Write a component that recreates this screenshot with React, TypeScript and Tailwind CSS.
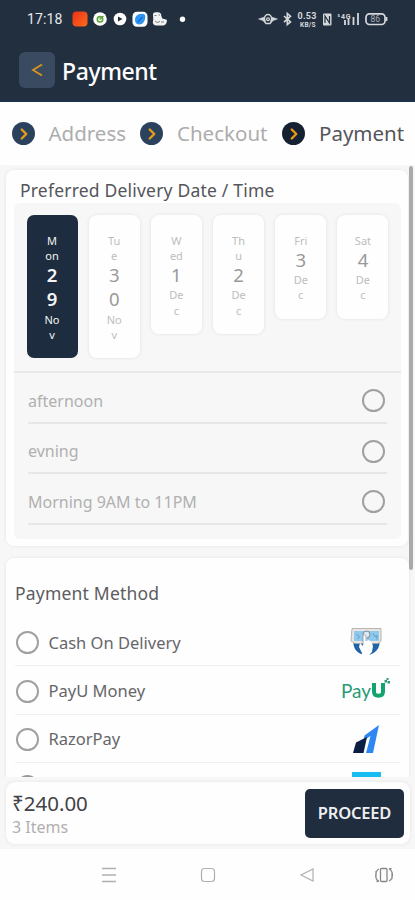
import { ChevronRight } from "lucide-react";

function StatusBar() {
  return (
    <div className="flex h-[38px] items-center px-[27px] text-white">
      <span className="w-[45px] font-['Roboto',sans-serif] text-[14px] tracking-[0.1px] whitespace-nowrap text-[#e8eaec]">
        17:18
      </span>
      <svg className="h-[38px] w-[120px]" viewBox="72 0 120 38">
        <defs>
          <linearGradient id="hot" x1="0" y1="0" x2="1" y2="1">
            <stop offset="0" stopColor="#e8321a" />
            <stop offset="1" stopColor="#ff6a1c" />
          </linearGradient>
        </defs>
        <rect x="72.5" y="11.5" width="15" height="15" rx="4" fill="url(#hot)" />
        <circle cx="100" cy="19" r="6.8" fill="#fff" />
        <circle cx="100" cy="19.3" r="2.7" fill="none" stroke="#5aa536" strokeWidth="1.6" />
        <path d="M99.5 19.5l4-3.5" stroke="#5aa536" strokeWidth="1.3" />
        <circle cx="120" cy="19" r="6.3" fill="#fff" />
        <path d="M118 16.5l4.5 2.5-4.5 2.5z" fill="#222f3f" />
        <rect x="132.5" y="11.8" width="15" height="15" rx="4.5" fill="#fff" />
        <path
          d="M135 20c0-4 3-6.5 6.5-6 2-.5 3.8.5 3.8 2.5 0 4.5-2.5 8-6 8-2.3 0-4.3-1.5-4.3-4.5z"
          fill="#2e94f2"
        />
        <path d="M138 22l4.5-5" stroke="#1769d0" strokeWidth="1.2" />
        <path
          d="M153 14.5c0-2 2-2.7 4-2.2 3-.3 4.5 1.2 4.3 3.7l1 2.5 4.5 1.2c.5 3.5-1.500 5.8-4.8 5.8h-6c-3-.3-3.700-3-2.700-5.500z"
          fill="#f2f2f2"
        />
        <path
          d="M154.5 15.5h2M158.5 15h1.5M155 21l2 1.5 3-1M161 22h3"
          stroke="#7b8490"
          strokeWidth="1"
          fill="none"
        />
        <circle cx="182.5" cy="19.2" r="2.7" fill="#fff" />
      </svg>
      <svg
        className="ml-auto h-[38px] w-[132px] shrink-0"
        viewBox="257 0 132 38"
        fill="none"
        stroke="#d5d8db"
      >
        <path d="M259.500 19l6-2 1 4.500zM278.500 19l-6-2-1 4.500z" fill="#d5d8db" strokeWidth=".5" />
        <path d="M265 21c0-3.500 1.500-6.500 4-6.500s4 3 4 6.500l-2 2.500h-4z" strokeWidth="1.500" />
        <circle cx="269" cy="19.300" r="1.400" strokeWidth="1.200" />
        <path d="M285 16l6.500 6-3.200 2.500V13.500l3.200 2.700-6.500 6" strokeWidth="1.600" />
        <g fill="#d5d8db" stroke="none" fontFamily="Roboto, sans-serif" fontWeight="700">
          <text x="298.500" y="18.500" fontSize="9" textLength="19">
            0.53
          </text>
          <text x="301" y="26.500" fontSize="6.500" textLength="15.500">
            KB/S
          </text>
          <text x="338.500" y="18.500" fontSize="7" textLength="13">
            ⁵4G
          </text>
        </g>
        <rect x="324" y="13.500" width="8.500" height="12" rx="1" fill="#d5d8db" stroke="none" />
        <path d="M326 23v-7l4.500 7v-7" stroke="#222f3f" strokeWidth="1.200" />
        <path d="M346 25v-5M349.500 25v-6M354.500 25V17M359 25V13" strokeWidth="1.800" />
        <rect x="367" y="13.800" width="19" height="10.700" rx="3.500" strokeWidth="1.700" />
        <path d="M387.500 17v4" strokeWidth="1.800" />
        <text
          x="371.500"
          y="22.300"
          fill="#a9afb6"
          stroke="none"
          fontSize="8.500"
          fontFamily="Roboto, sans-serif"
        >
          86
        </text>
      </svg>
    </div>
  );
}

function Header() {
  return (
    <header className="h-[102px] shrink-0 border-b-[3px] border-[#1d3048] bg-[#222f3f]">
      <StatusBar />
      <div className="flex items-center pt-[14px] pl-[19px]">
        <button className="flex h-9 w-9 items-center justify-center rounded-[6px] bg-[#3a4b61]">
          <svg className="h-4 w-4" viewBox="0 0 16 16" fill="none">
            <path d="M13 2.500L4 8l9 5.500" stroke="#d9951f" strokeWidth="1.800" />
          </svg>
        </button>
        <h1 className="ml-[7px] pt-[2px] text-[23px] leading-[34px] font-medium tracking-[-0.4px] text-white">
          Payment
        </h1>
      </div>
    </header>
  );
}

function StepDot({ active = false }: { active?: boolean }) {
  return (
    <span
      className={
        active
          ? "flex h-[23px] w-[23px] items-center justify-center rounded-full bg-[#152033]"
          : "flex h-[23px] w-[23px] items-center justify-center rounded-full bg-[#2b425d]"
      }
    >
      <ChevronRight className="h-[18px] w-[18px] text-[#e79a18]" strokeWidth={3.2} />
    </span>
  );
}

function Steps() {
  return (
    <div className="flex h-[63px] shrink-0 items-center bg-[#fefefe] pl-[12px] text-[20.5px] text-[#adadad]">
      <StepDot />
      <span className="ml-[13.5px] w-[91.5px] whitespace-nowrap">Address</span>
      <StepDot />
      <span className="ml-[14px] w-[105px] whitespace-nowrap">Checkout</span>
      <StepDot active />
      <span className="ml-[14px] whitespace-nowrap text-[#55555a]">Payment</span>
    </div>
  );
}

const days = [
  { day: ["M", "on"], date: ["2", "9"], month: ["No", "v"], selected: true },
  { day: ["Tu", "e"], date: ["3", "0"], month: ["No", "v"] },
  { day: ["W", "ed"], date: ["1"], month: ["De", "c"] },
  { day: ["Th", "u"], date: ["2"], month: ["De", "c"] },
  { day: ["Fri"], date: ["3"], month: ["De", "c"] },
  { day: ["Sat"], date: ["4"], month: ["De", "c"] },
];

const slots = ["afternoon", "evning", "Morning 9AM to 11PM"];

function DayTile({ item }: { item: (typeof days)[number] }) {
  return (
    <div
      className={
        item.selected
          ? "w-[51px] rounded-[7px] bg-[#1d2c3e] pt-[17.5px] pb-[16px] text-center text-[#f4f4f4]"
          : "w-[51px] rounded-[8px] bg-[#fefefe] pt-[17.5px] pb-[16px] text-center text-[#bdbdbd] shadow-[0_0_3px_1px_#eaeaea]"
      }
    >
      {item.day.map((part) => (
        <div key={part} className="text-[11px] leading-[15.2px]">
          {part}
        </div>
      ))}
      {item.date.map((part) => (
        <div
          key={part}
          className={
            item.selected
              ? "text-[18.5px] leading-[24.5px] font-semibold"
              : "text-[18.5px] leading-[24.5px] text-[#999]"
          }
        >
          {part}
        </div>
      ))}
      {item.month.map((part) => (
        <div key={part} className="text-[11px] leading-[15.2px]">
          {part}
        </div>
      ))}
    </div>
  );
}

function Radio() {
  return <span className="h-[23px] w-[23px] shrink-0 rounded-full border-2 border-[#a0a0a0]" />;
}

function DeliveryCard() {
  return (
    <section className="h-[376px] w-[402px] shrink-0 rounded-[8px] bg-[#fefefe] pt-[6px] pr-[7px] pl-2 shadow-[0_0_3px_1px_#ececec]">
      <h2 className="h-[27px] pl-[6px] text-[17.5px] leading-[29px] tracking-[0.2px] whitespace-nowrap text-[#55555a]">
        Preferred Delivery Date / Time
      </h2>
      <div className="h-[336px] rounded-[6px] bg-[#f7f7f7]">
        <div className="flex h-[170px] items-start gap-[11.2px] border-b-2 border-[#e9e9e9] pt-[12px] pl-[12.5px]">
          {days.map((item) => (
            <DayTile key={item.date.join("")} item={item} />
          ))}
        </div>
        <div className="px-[14px]">
          {slots.map((slot) => (
            <div
              key={slot}
              className="flex h-[50.6px] items-center justify-between border-b-2 border-[#e7e7e7] pt-[7px] pr-[2px] text-[16px] text-[#b0b0b0]"
            >
              {slot}
              <Radio />
            </div>
          ))}
        </div>
      </div>
    </section>
  );
}

function CashLogo() {
  return (
    <svg className="h-8 w-8" viewBox="0 0 32 32">
      <path d="M3.5 16h26c0 6-5 10-9 11.5h-8C7.5 26 3.5 22 3.5 16z" fill="#1f62a8" />
      <path d="M2 1.5h29V14l-3 2.5H5L1 14z" fill="#e8e5e2" stroke="#aaa5a0" strokeWidth=".8" />
      <path d="M4 4h25v10H4z" fill="#8fc9ee" />
      <path d="M6.5 7l3 3-2 2M23 6.5l2 3 2-1v4" stroke="#5a9cc9" fill="none" />
      <circle cx="16.5" cy="7.5" r="3.5" fill="#dceaf3" stroke="#778792" />
      <path
        d="M12 31v-5l-3-6 1-4 3 3V9c0-2 3.5-2 3.5 0v5l2-1 3 2 1.5 4-1 6-3 3v3z"
        fill="#fff"
      />
      <path d="M13 18V9c0-1.500 3-1.500 3 0v5" stroke="#8b9299" strokeWidth=".8" fill="none" />
    </svg>
  );
}

function PayULogo() {
  return (
    <svg className="h-[26px] w-[50px]" viewBox="0 0 50 26" fill="#2b9a78">
      <text x="0" y="19.5" fontFamily="Lato, sans-serif" fontSize="19" textLength="30">
        Pay
      </text>
      <path
        d="M33 5v8.500c0 3 1 4.200 4.500 4.200s4.500-1.200 4.500-4.200V5"
        fill="none"
        stroke="#14a36f"
        strokeWidth="4"
      />
      <path d="M43.500 2H46v2.500h-2.500zM45.500 0h2v2h-2zM46.500 3h2.500v2.500h-2.500z" />
    </svg>
  );
}

function RazorLogo() {
  return (
    <svg className="h-[30px] w-[28px]" viewBox="0 0 28 30">
      <path d="M27 1L21 29h-7l4.5-17-7 4.500 1-5z" fill="#2f87f3" />
      <path d="M4 18.5L15 13l-3.500 16H1z" fill="#0b1d42" />
    </svg>
  );
}

const methods = [
  { name: "Cash On Delivery", logo: <CashLogo /> },
  { name: "PayU Money", logo: <PayULogo /> },
  { name: "RazorPay", logo: <RazorLogo /> },
];

function MethodCard() {
  return (
    <section className="mt-[12px] h-[219px] w-[403px] shrink-0 overflow-hidden rounded-t-[8px] bg-[#fefefe] px-[9px] shadow-[0_0_3px_1px_#ececec]">
      <h2 className="h-[60px] pt-[20px] text-[17.5px] leading-[30px] tracking-[0.2px] text-[#5c5c60]">
        Payment Method
      </h2>
      {methods.map((method) => (
        <label
          key={method.name}
          className="flex h-[48.3px] items-center border-b border-[#efefef] pt-[2.5px] pl-[1px] text-[16.5px] text-[#66666a]"
        >
          <Radio />
          <span className="ml-[9.5px] grow whitespace-nowrap">{method.name}</span>
          <span className="flex w-[68px] justify-center">{method.logo}</span>
        </label>
      ))}
      <div className="flex items-start justify-between pt-[9px] pr-[19px] pl-[1px]">
        <span className="pt-[3px]">
          <span className="block h-[23px] w-[23px] rounded-full border-2 border-[#999]" />
        </span>
        <span className="h-[20px] w-[29px] bg-[#17bdf0]" />
      </div>
    </section>
  );
}

function CheckoutBar() {
  return (
    <div className="h-[72px] shrink-0 bg-[#f7f7f7] pt-[5px] pr-[5px] pl-[6px]">
      <div className="flex h-[62px] items-center justify-between rounded-[9px] bg-[#fefefe] pr-[6px] pl-[6px] shadow-[0_0_3px_1px_#ececec]">
        <div className="pt-[3px]">
          <div className="h-[25px] text-[20.5px] leading-[26px] text-[#434345]">₹240.00</div>
          <div className="h-[25px] text-[16px] leading-[25px] text-[#b0b0b0]">3 Items</div>
        </div>
        <button className="h-[49px] w-[99px] rounded-[5px] bg-[#1f2d3e] pt-[1px] text-[16.5px] font-semibold tracking-[-0.2px] text-[#eeedf2]">
          PROCEED
        </button>
      </div>
    </div>
  );
}

function NavBar() {
  return (
    <nav className="h-[51px] shrink-0 bg-[#fefefe]">
      <svg className="h-[51px] w-[415px]" viewBox="0 849 415 51" fill="none" stroke="#b0b0b0">
        <path d="M102 868.5h14M102 875h14M102 881.5h14" strokeWidth="1.3" />
        <rect x="201.5" y="868.5" width="13" height="13" rx="3" strokeWidth="1.2" />
        <path d="M313 869v12l-12-6z" strokeWidth="1.2" />
        <g stroke="#888" strokeWidth="1.3">
          <rect x="380.5" y="868.5" width="6.5" height="13" rx="1" />
          <path d="M379 869c-4 2-4.500 10-.5 12M389 869c4.500 2 4.500 10 0 12M376 871v7M392 872v7M389 869l2.500-.5M379 881l-2.500.5" />
        </g>
      </svg>
    </nav>
  );
}

function App() {
  return (
    <div className="flex h-[900px] w-[415px] flex-col overflow-hidden bg-[#fefefe] font-['Noto_Sans',sans-serif]">
      <Header />
      <Steps />
      <main className="relative flex h-[612px] shrink-0 flex-col overflow-hidden bg-[#f7f7f7] pt-[5px] pl-[6px]">
        <DeliveryCard />
        <MethodCard />
        {/* scroll thumb */}
        <div className="absolute top-[1px] right-[2px] h-[404px] w-[4px] rounded-full bg-[#aaa]" />
      </main>
      <CheckoutBar />
      <NavBar />
    </div>
  );
}

export default App;
